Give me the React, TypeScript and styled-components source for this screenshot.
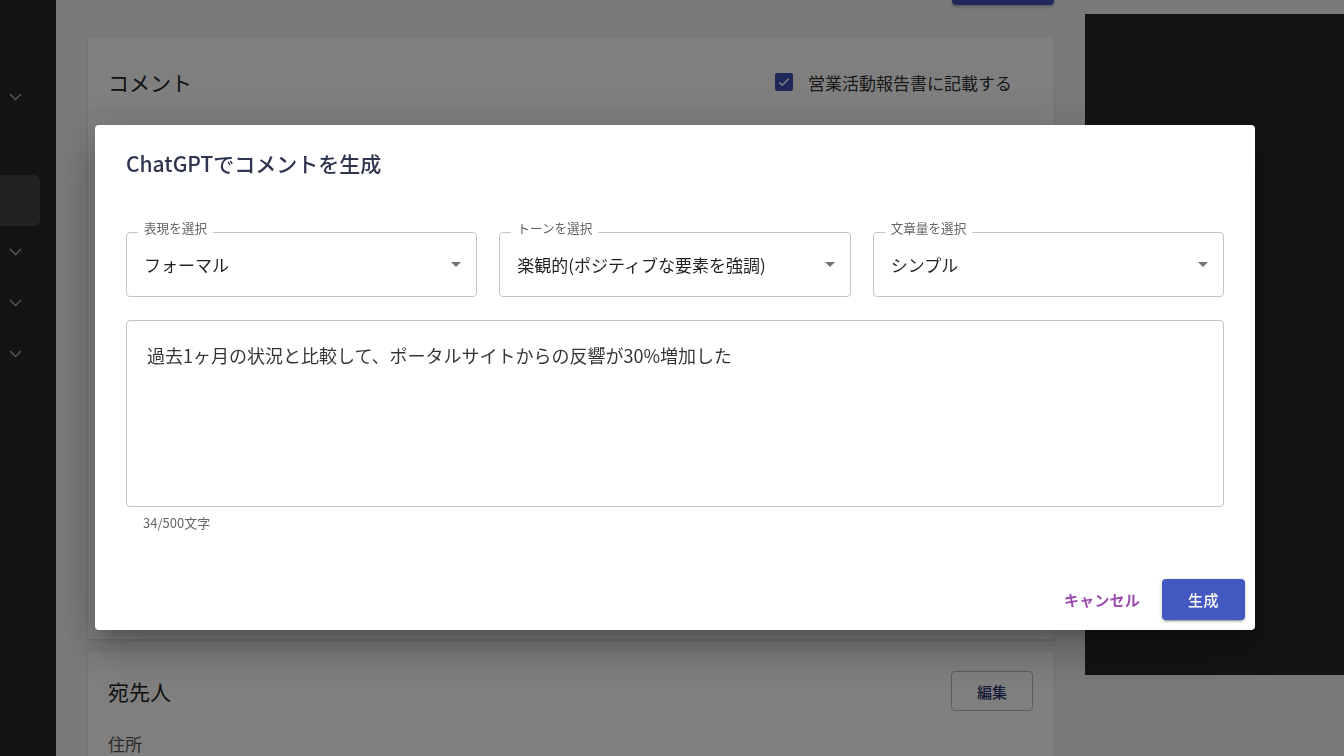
import React from "react";
import styled, { createGlobalStyle } from "styled-components";

const GlobalStyle = createGlobalStyle`
  html, body {
    margin: 0;
    padding: 0;
    height: 100%;
    overflow: hidden;
  }
  body {
    font-family: "Noto Sans CJK JP", "Noto Sans", sans-serif;
    background: #f4f4f4;
    color: #1f1f1f;
  }
  * { box-sizing: border-box; }
`;

const Page = styled.div`
  display: flex;
  width: 1344px;
  height: 756px;
  overflow: hidden;
  background: #f4f4f4;
`;

const Sidebar = styled.nav`
  width: 56px;
  flex-shrink: 0;
  background: #282828;
  padding-top: 71px;
  display: flex;
  flex-direction: column;
`;

const NavItem = styled.div<{ $active?: boolean }>`
  height: 51px;
  flex-shrink: 0;
  width: ${(p) => (p.$active ? "40px" : "56px")};
  margin-top: ${(p) => (p.$active ? "2px" : "0")};
  display: flex;
  align-items: center;
  padding-left: 9px;
  background: ${(p) => (p.$active ? "#444444" : "transparent")};
  border-radius: ${(p) => (p.$active ? "0 6px 6px 0" : "0")};
  color: #b4b4b4;
`;

const Main = styled.main`
  flex: 1;
  display: flex;
  gap: 31px;
  padding-left: 32px;
`;

const Column = styled.div`
  width: 966px;
  flex-shrink: 0;
  display: flex;
  flex-direction: column;
`;

const Toolbar = styled.div`
  display: flex;
  justify-content: flex-end;
  margin-top: -31px;
  margin-bottom: 32px;
`;

const PrimaryTop = styled.div`
  width: 102px;
  height: 36px;
  border-radius: 4px;
  background: #3f51b5;
  box-shadow: 0 2px 3px rgba(0, 0, 0, 0.25);
`;

const Card = styled.section<{ $height: number }>`
  background: #ffffff;
  border-radius: 4px;
  box-shadow: 0 1px 3px rgba(0, 0, 0, 0.12);
  height: ${(p) => p.$height}px;
  display: flex;
  flex-direction: column;
  flex-shrink: 0;
`;

const CardHeader = styled.div<{ $pad: string }>`
  display: flex;
  align-items: center;
  justify-content: space-between;
  padding: ${(p) => p.$pad};
  min-height: 40px;
`;

const CardTitle = styled.h2`
  margin: 0;
  font-size: 21px;
  font-weight: 400;
  line-height: 32px;
  color: #222222;
`;

const CheckRow = styled.label`
  display: flex;
  align-items: center;
  gap: 15px;
  font-size: 17px;
  color: #333333;
  margin-right: 42px;
`;

const CheckBox = styled.span`
  width: 18px;
  height: 18px;
  border-radius: 2px;
  background: #3f51b5;
  display: flex;
  align-items: center;
  justify-content: center;
`;

const InnerArea = styled.div`
  margin: 0 14px 0 0;
  flex: 1;
  background: #fcfcfc;
  border-top: 1px solid #f2f2f2;
`;

const CardGap = styled.div`
  height: 12px;
  flex-shrink: 0;
`;

const OutlineButton = styled.button`
  width: 82px;
  height: 40px;
  border: 1px solid #bdbdbd;
  border-radius: 4px;
  background: #ffffff;
  font-family: inherit;
  font-size: 15px;
  font-weight: 500;
  color: #2c3470;
`;

const FieldName = styled.div`
  padding: 20px 20px 0;
  font-size: 17px;
  color: #555555;
`;

const RightPanel = styled.aside`
  flex: 1;
  margin-top: 14px;
  height: 661px;
  background: #282828;
`;

const Backdrop = styled.div`
  position: fixed;
  inset: 0;
  background: rgba(0, 0, 0, 0.5);
  display: flex;
  align-items: center;
  justify-content: center;
  padding-left: 6px;
  padding-bottom: 2px;
`;

const Dialog = styled.div`
  width: 1160px;
  background: #ffffff;
  border-radius: 4px;
  box-shadow: 0 11px 15px -7px rgba(0, 0, 0, 0.2),
    0 24px 38px 3px rgba(0, 0, 0, 0.14), 0 9px 46px 8px rgba(0, 0, 0, 0.12);
  display: flex;
  flex-direction: column;
`;

const DialogTitle = styled.h2`
  margin: 0;
  padding: 22px 31px 0;
  font-size: 21px;
  font-weight: 500;
  line-height: 32px;
  color: #30354f;
`;

const DialogBody = styled.div`
  padding: 53px 31px 0;
  display: flex;
  flex-direction: column;
`;

const SelectRow = styled.div`
  display: grid;
  grid-template-columns: repeat(3, 1fr);
  gap: 22px;
`;

const Field = styled.div`
  position: relative;
`;

const SelectBox = styled.div`
  height: 65px;
  border: 1px solid #c4c4c4;
  border-radius: 4px;
  display: flex;
  align-items: center;
  justify-content: space-between;
  padding: 0 8px 0 17px;
  font-size: 17px;
  color: rgba(0, 0, 0, 0.87);
`;

const FloatLabel = styled.span`
  position: absolute;
  top: -12px;
  left: 12px;
  padding: 0 6px;
  background: #ffffff;
  font-size: 12.6px;
  line-height: 16px;
  color: #666666;
`;

const TextBox = styled.textarea`
  display: block;
  margin-top: 23px;
  width: 100%;
  height: 187px;
  border: 1px solid #c4c4c4;
  border-radius: 4px;
  padding: 21px 20px;
  resize: none;
  font-family: inherit;
  font-size: 18px;
  line-height: 26px;
  color: rgba(0, 0, 0, 0.8);
  outline: none;
`;

const Helper = styled.div`
  margin: 6px 0 0 17px;
  font-size: 13px;
  line-height: 20px;
  color: #666666;
`;

const Actions = styled.div`
  display: flex;
  justify-content: flex-end;
  align-items: center;
  gap: 14px;
  padding: 46px 10px 10px;
`;

const TextButton = styled.button`
  height: 41px;
  padding: 0 8px;
  border: none;
  background: none;
  font-family: inherit;
  font-size: 15px;
  font-weight: 700;
  letter-spacing: 0.2px;
  color: #9b4cae;
`;

const ContainedButton = styled.button`
  height: 41px;
  width: 83px;
  border: none;
  border-radius: 4px;
  background: #4359c1;
  color: #ffffff;
  font-family: inherit;
  font-size: 15px;
  font-weight: 500;
  letter-spacing: 0.5px;
  box-shadow: 0 3px 1px -2px rgba(0, 0, 0, 0.2), 0 2px 2px 0 rgba(0, 0, 0, 0.14),
    0 1px 5px 0 rgba(0, 0, 0, 0.12);
`;

const Chevron = () => (
  <svg width="13" height="8" viewBox="0 0 13 8" fill="none">
    <path d="M1 1l5.5 5.5L12 1" stroke="currentColor" strokeWidth="1.4" />
  </svg>
);

const ArrowDrop = () => (
  <svg width="24" height="24" viewBox="0 0 24 24" fill="rgba(0,0,0,0.54)">
    <path d="M7 10l5 5 5-5z" />
  </svg>
);

const Check = () => (
  <svg width="14" height="14" viewBox="0 0 24 24" fill="none">
    <path d="M4 12.5l5 5L20 6.5" stroke="#ffffff" strokeWidth="2.6" />
  </svg>
);

const selects = [
  { label: "表現を選択", value: "フォーマル" },
  { label: "トーンを選択", value: "楽観的(ポジティブな要素を強調)" },
  { label: "文章量を選択", value: "シンプル" },
];

const navItems = [true, false, "active", true, true, true];

const commentText = "過去1ヶ月の状況と比較して、ポータルサイトからの反響が30%増加した";

export default function App() {
  return (
    <>
      <GlobalStyle />
      <Page>
        <Sidebar>
          {navItems.map((item, i) => (
            <NavItem key={i} $active={item === "active"}>
              {item === true && <Chevron />}
            </NavItem>
          ))}
        </Sidebar>
        <Main>
          <Column>
            <Toolbar>
              <PrimaryTop />
            </Toolbar>
            <Card $height={602}>
              <CardHeader $pad="29px 0 10px 20px">
                <CardTitle>コメント</CardTitle>
                <CheckRow>
                  <CheckBox>
                    <Check />
                  </CheckBox>
                  営業活動報告書に記載する
                </CheckRow>
              </CardHeader>
              <InnerArea />
            </Card>
            <CardGap />
            <Card $height={140}>
              <CardHeader $pad="20px 21px 0 20px">
                <CardTitle>宛先人</CardTitle>
                <OutlineButton>編集</OutlineButton>
              </CardHeader>
              <FieldName>住所</FieldName>
            </Card>
          </Column>
          <RightPanel />
        </Main>
      </Page>
      <Backdrop>
        <Dialog>
          <DialogTitle>ChatGPTでコメントを生成</DialogTitle>
          <DialogBody>
            <SelectRow>
              {selects.map((s) => (
                <Field key={s.label}>
                  <SelectBox>
                    <span>{s.value}</span>
                    <ArrowDrop />
                  </SelectBox>
                  <FloatLabel>{s.label}</FloatLabel>
                </Field>
              ))}
            </SelectRow>
            <TextBox readOnly defaultValue={commentText} />
            <Helper>34/500文字</Helper>
          </DialogBody>
          <Actions>
            <TextButton>キャンセル</TextButton>
            <ContainedButton>生成</ContainedButton>
          </Actions>
        </Dialog>
      </Backdrop>
    </>
  );
}
